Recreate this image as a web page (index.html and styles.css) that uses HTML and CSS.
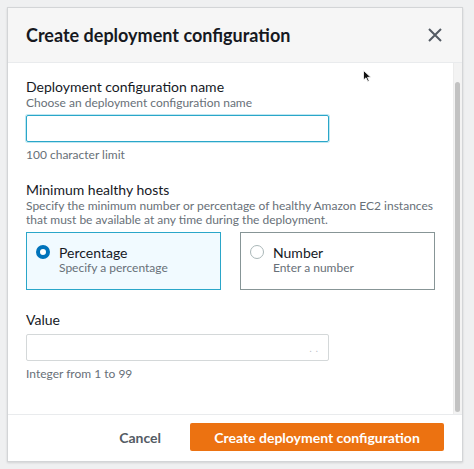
FILE: index.html
```html
<!DOCTYPE html>
<html>
<head>
<meta charset="utf-8">
<link rel="stylesheet" href="styles.css">
</head>
<body>
<div class="modal">
  <div class="header">
    <h1 class="title">Create deployment configuration</h1>
    <svg class="close" width="14" height="14" viewBox="0 0 14 14"><path d="M1 1 L13 13 M13 1 L1 13" stroke="#545b64" stroke-width="2" fill="none"/></svg>
  </div>
  <div class="main">
    <div class="content">
      <div class="field">
        <div class="label">Deployment configuration name</div>
        <div class="desc">Choose an deployment configuration name</div>
        <div class="input focused"></div>
        <div class="hint">100 character limit</div>
      </div>
      <div class="field f2">
        <div class="label">Minimum healthy hosts</div>
        <div class="desc">Specify the minimum number or percentage of healthy Amazon EC2 instances that must be available at any time during the deployment.</div>
        <div class="tiles">
          <div class="tile selected">
            <span class="radio on"></span>
            <div>
              <div class="tile-title">Percentage</div>
              <div class="tile-desc">Specify a percentage</div>
            </div>
          </div>
          <div class="tile">
            <span class="radio"></span>
            <div>
              <div class="tile-title">Number</div>
              <div class="tile-desc">Enter a number</div>
            </div>
          </div>
        </div>
      </div>
      <div class="field f3">
        <div class="label">Value</div>
        <div class="input plain"><span class="dots">. .</span></div>
        <div class="hint">Integer from 1 to 99</div>
      </div>
    </div>
    <div class="track"><div class="thumb"></div></div>
  </div>
  <div class="footer">
    <button class="btn-link">Cancel</button>
    <button class="btn-primary">Create deployment configuration</button>
  </div>
  <svg class="cursor" width="9" height="13" viewBox="0 0 9 13"><path d="M0.5 0.5 L0.5 10 L3 7.8 L4.8 11.5 L6.2 10.8 L4.5 7.3 L7.8 7.3 Z" fill="#111" stroke="#fff" stroke-width="0.8"/></svg>
</div>
</body>
</html>
```

FILE: styles.css
```css
* { box-sizing: border-box; }
html, body { margin: 0; padding: 0; }
body {
  width: 474px;
  height: 469px;
  background: #eff0f1;
  font-family: Lato, "Open Sans", sans-serif;
  color: #16191f;
  padding: 7px 0 0 7px;
  overflow: hidden;
}
.modal {
  position: relative;
  width: 456px;
  height: 455px;
  background: #fff;
  border: 1px solid #d3d5d7;
  box-shadow: 0 1px 2px rgba(0,0,0,0.12);
  display: flex;
  flex-direction: column;
}
.header {
  height: 55px;
  flex: none;
  background: #f6f6f6;
  border-bottom: 1px solid #e9ebed;
  display: flex;
  align-items: center;
  justify-content: space-between;
  padding: 0 20px 0 18px;
}
.title {
  margin: 0;
  font-size: 18px;
  font-weight: 700;
  color: #16191f;
}
.close { display: block; }
.main {
  flex: 1;
  display: flex;
  border-bottom: 1px solid #e9ebed;
}
.content {
  flex: 1;
  padding: 14px 0 0 18px;
  border-right: 1px solid #ececec;
}
.track {
  width: 8px;
  background: #f3f3f3;
  padding: 19px 1px 2px 1px;
}
.thumb {
  height: 100%;
  width: 5px;
  background: #c2c2c2;
  border-radius: 3px;
}
.label {
  font-size: 14px;
  line-height: 19px;
  color: #16191f;
}
.desc {
  font-size: 12px;
  line-height: 14px;
  color: #687078;
}
.input {
  width: 303px;
  height: 27px;
  margin-top: 5px;
  border: 1px solid #aab7b8;
  border-radius: 2px;
  position: relative;
}
.input.focused {
  border: 1px solid #2aa6c9;
  box-shadow: 0 0 0 1px rgba(0,161,201,0.25);
}
.input.plain { border-color: #d4d8d9; }
.dots {
  position: absolute;
  right: 9px;
  top: 8px;
  font-size: 9px;
  color: #b8bcbf;
  letter-spacing: 1px;
}
.hint {
  font-size: 12px;
  line-height: 14px;
  color: #687078;
  margin-top: 6px;
}
.f2 { margin-top: 18px; }
.tiles {
  display: flex;
  gap: 19px;
  width: 409px;
  margin-top: 5px;
}
.tile {
  width: 195px;
  height: 58px;
  border: 1px solid #879596;
  display: flex;
  align-items: flex-start;
  padding: 11px 9px 0 9px;
  gap: 9px;
}
.tile.selected {
  background: #f1faff;
  border-color: #2aa6c9;
}
.radio {
  width: 14px;
  height: 14px;
  border-radius: 50%;
  border: 1px solid #aab7b8;
  background: #fff;
  flex: none;
  margin-top: 1px;
}
.radio.on {
  border: 4px solid #0073bb;
}
.tile-title {
  font-size: 14px;
  line-height: 17px;
  color: #16191f;
}
.tile-desc {
  font-size: 12px;
  line-height: 14px;
  color: #687078;
}
.f3 { margin-top: 20px; }
.f3 .input { margin-top: 5px; }
.footer {
  height: 46px;
  flex: none;
  display: flex;
  align-items: center;
  justify-content: flex-end;
  padding: 0 18px 2px 0;
  gap: 29px;
}
button {
  font-family: Lato, "Open Sans", sans-serif;
  font-size: 14px;
  font-weight: 700;
  border: none;
  cursor: pointer;
}
.btn-link {
  background: none;
  color: #545b64;
  padding: 0;
}
.btn-primary {
  background: #ec7211;
  color: #fff;
  height: 28px;
  width: 254px;
  border-radius: 2px;
  padding: 0;
}
.cursor {
  position: absolute;
  left: 355px;
  top: 62px;
}
```
